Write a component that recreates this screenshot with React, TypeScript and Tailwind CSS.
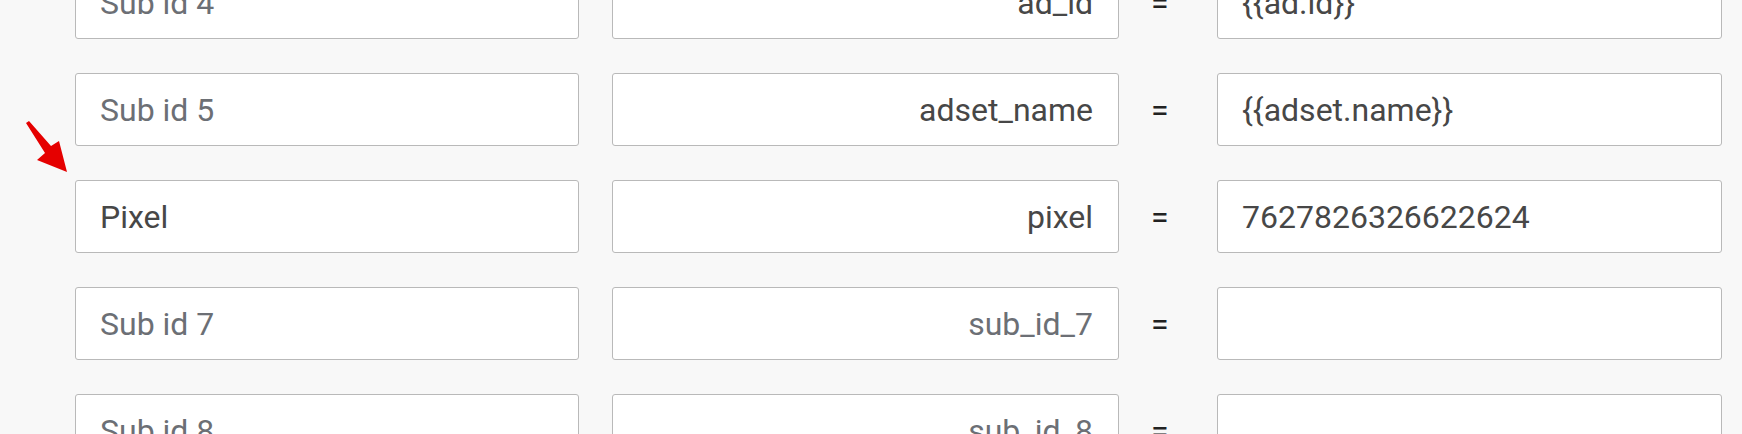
const rows = [
  { label: "Sub id 4", labelSet: false, key: "ad_id", keySet: true, value: "{{ad.id}}" },
  { label: "Sub id 5", labelSet: false, key: "adset_name", keySet: true, value: "{{adset.name}}" },
  { label: "Pixel", labelSet: true, key: "pixel", keySet: true, value: "7627826326622624" },
  { label: "Sub id 7", labelSet: false, key: "sub_id_7", keySet: false, value: "" },
  { label: "Sub id 8", labelSet: false, key: "sub_id_8", keySet: false, value: "" },
];

const Field = ({ text, filled, right, width }: any) => {
  return (
    <div
      className={
        "h-[73px] shrink-0 bg-white border border-[#b9b9b9] rounded-[3px] flex items-center " +
        width +
        (right ? " justify-end pr-[25px]" : " pl-[24px]")
      }
    >
      {text ? (
        <span className={"whitespace-nowrap " + (filled ? "text-[#474747]" : "text-[#6c6f75]")}>
          {text}
        </span>
      ) : null}
    </div>
  );
};

export default function App() {
  return (
    <div
      className="w-full h-[434px] bg-[#f8f8f8] overflow-hidden relative text-[32px]"
      style={{ fontFamily: "Roboto, 'Liberation Sans', sans-serif" }}
    >
      {/* pointer arrow */}
      <svg className="absolute left-0 top-0" width="80" height="180" viewBox="0 0 80 180">
        <polygon points="26,123 29,121 51,146 59,141 67,172 37,160 45,153" fill="#e50000" />
      </svg>

      <div className="flex flex-col gap-[34px] -mt-[34px] pl-[75px]">
        {rows.map((r) => (
          <div key={r.key} className="flex items-center">
            <Field text={r.label} filled={r.labelSet} width="w-[504px]" />
            <div className="w-[33px] shrink-0" />
            <Field text={r.key} filled={r.keySet} right width="w-[507px]" />
            <div className="w-[98px] shrink-0 pl-[32px] text-[#222]">=</div>
            <Field text={r.value} filled width="w-[505px]" />
          </div>
        ))}
      </div>
    </div>
  );
}
